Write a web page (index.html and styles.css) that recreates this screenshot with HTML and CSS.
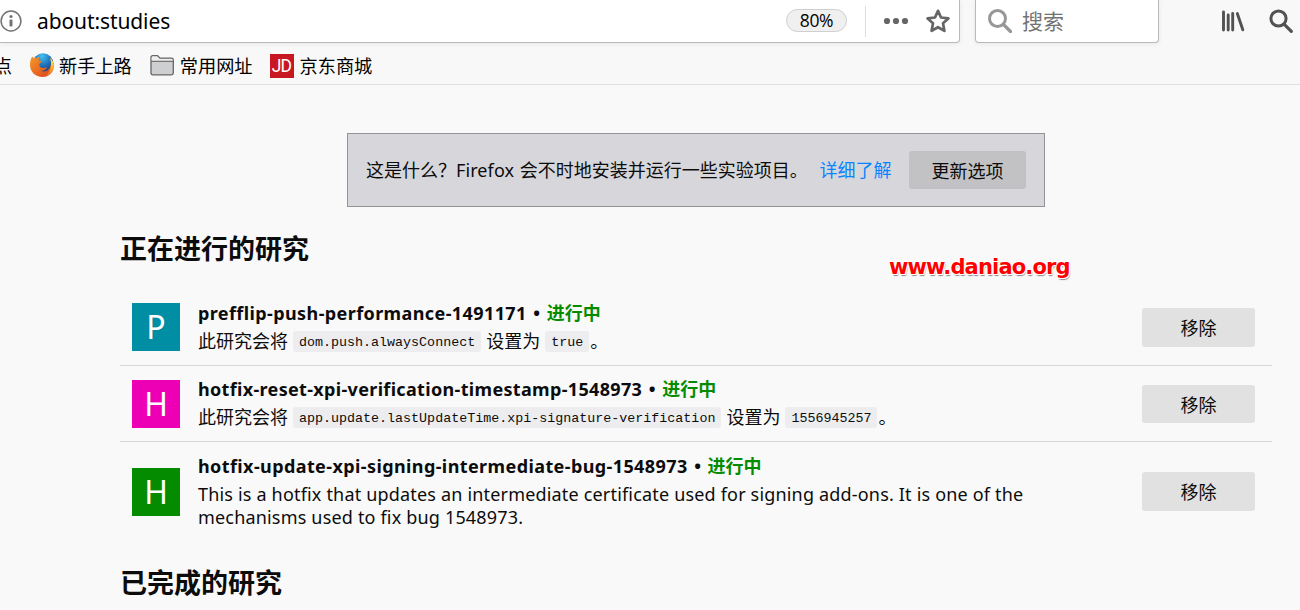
FILE: index.html
```html
<!DOCTYPE html>
<html lang="zh-CN">
<head>
<meta charset="utf-8">
<title>about:studies</title>
<link rel="stylesheet" href="styles.css">
</head>
<body>
<header class="chrome">
  <div class="navbar">
    <div class="urlbar">
      <svg class="info-icon" viewBox="0 0 24 24" width="24" height="24"><circle cx="11" cy="12" r="9.9" fill="none" stroke="#737373" stroke-width="1.5"/><circle cx="11" cy="7.5" r="1.6" fill="#737373"/><rect x="9.5" y="10.6" width="3" height="7" rx="1" fill="#737373"/></svg>
      <span class="url">about:studies</span>
      <span class="zoom">80%</span>
      <span class="divider"></span>
      <svg class="dots" viewBox="0 0 26 8" width="26" height="8" fill="#666"><circle cx="4" cy="4" r="3.1"/><circle cx="13" cy="4" r="3.1"/><circle cx="22" cy="4" r="3.1"/></svg>
      <svg class="star" viewBox="0 0 24 24" width="24" height="24"><path d="M12 1.800l3 6.700 7.400.9-5.400 4.900 1.400 7.500L12 18.200l-6.400 3.600L7 14.300 1.600 9.400 9 8.500z" fill="none" stroke="#666" stroke-width="2.7" stroke-linejoin="round"/></svg>
    </div>
    <div class="searchbar">
      <svg viewBox="0 0 24 24" width="24" height="24"><circle cx="9.500" cy="9.500" r="8" fill="none" stroke="#979797" stroke-width="3"/><path d="M15.500 15.500L22.500 22.500" stroke="#979797" stroke-width="3.200" stroke-linecap="round"/></svg>
      <span class="placeholder">搜索</span>
    </div>
    <svg class="library" viewBox="0 0 24 24" width="24" height="24" fill="none" stroke="#525252" stroke-width="2.900" stroke-linecap="round"><path d="M2.500 3v18M7.200 6v15M11.700 4.500V21M16.300 4.500L21.800 20.800"/></svg>
    <svg class="find" viewBox="0 0 24 24" width="24" height="24"><circle cx="9.500" cy="9.500" r="7.600" fill="none" stroke="#525252" stroke-width="3"/><path d="M15.300 15.300L22.300 22.300" stroke="#525252" stroke-width="3.200" stroke-linecap="round"/></svg>
  </div>
  <nav class="bookmarks">
    <span class="bm cut">点</span>
    <span class="bm firefox"><svg viewBox="0 0 24 24" width="24" height="24">
      <defs><radialGradient id="globe" cx=".45" cy=".15" r=".8"><stop offset="0" stop-color="#45c1ee"/><stop offset=".6" stop-color="#1d6cb5"/><stop offset="1" stop-color="#173f7c"/></radialGradient><linearGradient id="fox" x1="0" y1="0" x2="1" y2="1"><stop offset="0" stop-color="#f39a2b"/><stop offset=".55" stop-color="#e9671f"/><stop offset="1" stop-color="#d33f24"/></linearGradient><linearGradient id="tail" x1="0" y1="0" x2="0" y2="1"><stop offset="0" stop-color="#fff06a"/><stop offset=".5" stop-color="#fbb829"/><stop offset="1" stop-color="#e9631f"/></linearGradient></defs>
      <circle cx="13" cy="10.500" r="10.300" fill="url(#globe)"/>
      <path d="M2.200 3.500C3 5 4 5 6 5c2-.8 3-.8 4-.5-1 1-1.500 1.800-1.300 2.800 1 .7 2.300.6 3.300.9-.2 1.300-2.200 2-2.800 2.800-.2 3 2 4.300 4.300 4 1.500-.4 2.500-.8 3.500-.2-1 2.200-4 3.400-6.500 2.700 4 2.500 9.500.2 10.500-6.500.5-3-.3-5-1-6.200 2.500 2 4 5 3.800 8.500C23.500 20 18.500 24 12.500 24 5.500 24 0 19 0 12 0 8.500.8 5.500 2.200 3.500z" fill="url(#fox)"/>
      <path d="M20 5c2.500 2 4 5 3.700 8.500-.5 5-4 9-9 10.300 4-3 6.300-7 6.300-12 .2-2.800-.3-5-1-6.800z" fill="url(#tail)"/>
    </svg>新手上路</span>
    <span class="bm folder"><svg viewBox="0 0 24 24" width="24" height="24"><path d="M1 20V4.500Q1 2.700 2.800 2.700h4.700L10 5.200h11.500Q23.300 5.200 23.300 7v13q0 1.800-1.800 1.800H2.800Q1 21.800 1 20z" fill="#cecfd0" stroke="#666" stroke-width="1.300"/><path d="M1.700 8V4.800Q1.700 3.400 3 3.400h4.200L9.700 5.900h11.800q1.100 0 1.100 1.100v1z" fill="#eee"/><path d="M1 8.300h22.300" stroke="#666" stroke-width="1.100"/></svg>常用网址</span>
    <span class="bm jd"><span class="jd-logo">JD</span>京东商城</span>
  </nav>
</header>
<main class="page">
  <section class="info-box">
    <span class="info-text">这是什么？<span class="ff">Firefox</span> 会不时地安装并运行一些实验项目。</span>
    <a class="more">详细了解</a>
    <button class="btn update">更新选项</button>
  </section>
  <h2 class="heading">正在进行的研究<span class="watermark">www.daniao.org</span></h2>
  <ul class="studies">
    <li class="study first">
      <div class="avatar teal">P</div>
      <div class="body">
        <div class="name"><span class="slug">prefflip-push-performance-1491171</span><span class="dot">•</span><span class="status">进行中</span></div>
        <div class="desc">此研究会将<code>dom.push.alwaysConnect</code>设置为<code>true</code><span class="stop">。</span></div>
      </div>
      <button class="btn remove">移除</button>
    </li>
    <li class="study second">
      <div class="avatar pink">H</div>
      <div class="body">
        <div class="name"><span class="slug">hotfix-reset-xpi-verification-timestamp-1548973</span><span class="dot">•</span><span class="status">进行中</span></div>
        <div class="desc">此研究会将<code>app.update.lastUpdateTime.xpi-signature-verification</code>设置为<code>1556945257</code><span class="stop">。</span></div>
      </div>
      <button class="btn remove">移除</button>
    </li>
    <li class="study tall">
      <div class="avatar green">H</div>
      <div class="body">
        <div class="name"><span class="slug">hotfix-update-xpi-signing-intermediate-bug-1548973</span><span class="dot">•</span><span class="status">进行中</span></div>
        <div class="desc latin">This is a hotfix that updates an intermediate certificate used for signing add-ons. It is one of the<br>mechanisms used to fix bug 1548973.</div>
      </div>
      <button class="btn remove">移除</button>
    </li>
  </ul>
  <h2 class="heading done">已完成的研究</h2>
</main>
</body>
</html>
```
FILE: styles.css
```css
* { box-sizing: border-box; }
body {
  margin: 0;
  width: 1300px;
  height: 610px;
  overflow: hidden;
  background: #f9f9fa;
  color: #0c0c0d;
  font: 18px/24px "Noto Sans", "Noto Sans CJK SC", sans-serif;
}
svg { display: block; flex: none; }

/* browser toolbar */
.chrome { height: 85px; background: #f8f8f8; border-bottom: 1px solid #e0e0e0; }
.navbar { display: flex; height: 43px; align-items: flex-start; }
.urlbar, .searchbar {
  display: flex;
  align-items: center;
  height: 43px;
  background: #fff;
  border: 1px solid #b9b9b9;
  border-top: 0;
  box-shadow: 0 1px 5px rgba(0, 0, 0, .07);
}
.urlbar { width: 960px; border-left: 0; border-radius: 0 0 4px 0; }
.url { margin-left: 13px; width: 749px; color: #000; font-size: 21px; letter-spacing: -.1px; white-space: nowrap; }
.zoom {
  width: 61px;
  height: 23px;
  margin-bottom: 1px;
  border: 1px solid #cfcfcf;
  border-radius: 12px;
  background: #f0f0f0;
  color: #000;
  font: 17.5px/21px "Open Sans", sans-serif;
  letter-spacing: -.3px;
  text-align: center;
}
.divider { width: 1px; height: 31px; margin: 0 17px 0 18px; background: #dedede; }
.star { margin-left: 17px; }
.searchbar { width: 184px; margin-left: 15px; padding-left: 12px; border-radius: 0 0 4px 4px; }
.placeholder { margin: -2px 0 0 10px; color: #737373; font: 21px/30px "Noto Sans CJK SC", sans-serif; }
.library { margin: 9px 0 0 62px; }
.find { margin: 9px 0 0 24px; }
.bookmarks { display: flex; height: 41px; padding-top: 3px; align-items: center; color: #000; font: 18.2px/24px "Noto Sans CJK SC", sans-serif; }
.bm { display: flex; align-items: center; gap: 5px; height: 24px; }
.cut { width: 12px; justify-content: flex-end; overflow: hidden; }
.firefox { margin-left: 18px; }
.folder { margin-left: 18px; gap: 6px; }
.jd { margin-left: 17px; gap: 6px; }
.jd-logo { width: 24px; height: 24px; margin-top: 1px; background: #c81623; color: #fff; font: 17.5px/24px Roboto, sans-serif; letter-spacing: -.8px; text-align: center; }

/* studies page */
.page { padding: 48px 28px 0 120px; }
.info-box {
  display: flex;
  align-items: center;
  width: 698px;
  height: 74px;
  margin-left: 227px;
  padding-left: 18px;
  border: 1px solid #939395;
  background: #d7d7db;
  white-space: nowrap;
}
.info-text { width: 438px; margin-top: -1px; font-family: "Noto Sans CJK SC", sans-serif; }
.ff { margin-right: 1.500px; font-family: "Noto Sans", sans-serif; letter-spacing: .1px; }
.more { width: 72px; margin-left: 15.500px; color: #0a84ff; }
.btn { padding: 0; border: 0; border-radius: 3px; background: #e1e1e1; color: #0c0c0d; font: 18px/36px "Noto Sans CJK SC", sans-serif; text-align: center; }
.update { width: 117px; height: 38px; margin-left: 17.500px; padding-bottom: 1px; background: #c2c2c5; }
.heading { display: flex; height: 83px; margin: 0; padding-top: 21px; font: bold 27px/40px "Noto Sans CJK SC", sans-serif; }
.watermark {
  margin: 20px 0 0 580px;
  color: #f00;
  font: bold 21px/38px "DejaVu Sans", sans-serif;
  letter-spacing: -.85px;
  text-shadow: -1px -1px #fff, 1px -1px #fff, -1px 1px #fff, 1px 1px #fff, 1px 2px 1px #888;
}
.studies { margin: 0; padding: 0; list-style: none; }
.study { display: flex; align-items: center; height: 76px; padding: 0 17px 0 12px; border-bottom: 1px solid #d7d7db; }
.study.tall { height: 100px; padding-bottom: 2px; border: 0; }
.avatar { width: 48px; height: 48px; color: #fff; font: 32px/48px "Noto Sans", sans-serif; text-align: center; }
.first .avatar { margin-top: -1px; }
.tall .avatar { margin-top: 2px; }
.teal { background: #008ea4; }
.pink { background: #ed00b5; }
.green { background: #058b00; }
.body { width: 944px; margin-left: 18px; white-space: nowrap; }
.name { display: flex; height: 27px; line-height: 24px; font-weight: bold; }
.slug { letter-spacing: .4px; }
.second .slug { letter-spacing: .33px; }
.dot { width: 20px; text-align: center; }
.status { color: #058b00; }
.desc { display: flex; height: 26px; line-height: 24px; font-family: "Noto Sans CJK SC", sans-serif; }
.desc code { height: 21px; margin: 3px 5px 0; padding: 0 6px; border-radius: 3px; background: #ededf0; font: 13.35px/24px "Liberation Mono", monospace; }
.stop { margin-left: -4px; }
.latin { display: block; height: 48px; line-height: 23px; padding-top: 2px; font-family: "Noto Sans", sans-serif; letter-spacing: .18px; }
.remove { width: 113px; height: 39px; padding-bottom: 1px; }
.second .remove { height: 38px; margin-top: 1px; }
.done { padding-top: 20px; }
```
